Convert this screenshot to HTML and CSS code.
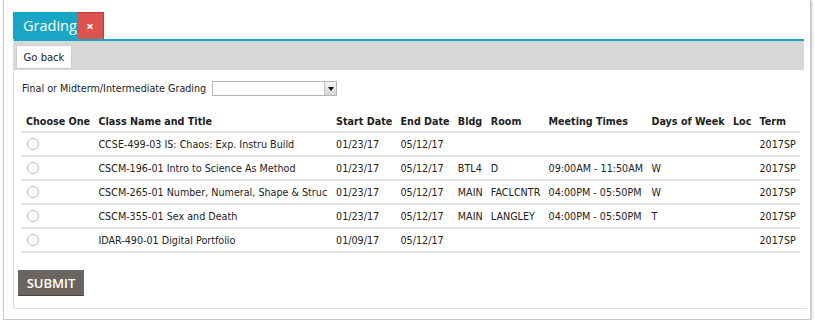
FILE: index.html
```html
<!DOCTYPE html>
<html lang="en">
<head>
    <meta charset="UTF-8">
    <title>Grading</title>
    <link rel="stylesheet" href="styles.css">
</head>
<body>
    <div class="window">
        <div class="panel">
            <div class="tabs">
                <span class="tab active">Grading</span>
                <span class="tab close">&times;</span>
            </div>
            <div class="toolbar">
                <button class="btn">Go back</button>
            </div>
            <div class="content">
                <div class="field">
                    <label for="gtype">Final or Midterm/Intermediate Grading</label>
                    <span class="select" id="gtype"><span class="arrow"></span></span>
                </div>

                <table class="grid">
                    <thead>
                        <tr>
                            <th class="c-choose">Choose One</th>
                            <th>Class Name and Title</th>
                            <th>Start Date</th>
                            <th>End Date</th>
                            <th>Bldg</th>
                            <th>Room</th>
                            <th>Meeting Times</th>
                            <th>Days of Week</th>
                            <th>Loc</th>
                            <th>Term</th>
                        </tr>
                    </thead>
                    <tbody>
                        <tr>
                            <td class="c-choose"><span class="radio"></span></td>
                            <td>CCSE-499-03 IS: Chaos: Exp. Instru Build</td>
                            <td>01/23/17</td>
                            <td>05/12/17</td>
                            <td></td>
                            <td></td>
                            <td></td>
                            <td></td>
                            <td></td>
                            <td>2017SP</td>
                        </tr>
                        <tr>
                            <td class="c-choose"><span class="radio"></span></td>
                            <td>CSCM-196-01 Intro to Science As Method</td>
                            <td>01/23/17</td>
                            <td>05/12/17</td>
                            <td>BTL4</td>
                            <td>D</td>
                            <td>09:00AM - 11:50AM</td>
                            <td>W</td>
                            <td></td>
                            <td>2017SP</td>
                        </tr>
                        <tr>
                            <td class="c-choose"><span class="radio"></span></td>
                            <td>CSCM-265-01 Number, Numeral, Shape &amp; Struc</td>
                            <td>01/23/17</td>
                            <td>05/12/17</td>
                            <td>MAIN</td>
                            <td>FACLCNTR</td>
                            <td>04:00PM - 05:50PM</td>
                            <td>W</td>
                            <td></td>
                            <td>2017SP</td>
                        </tr>
                        <tr>
                            <td class="c-choose"><span class="radio"></span></td>
                            <td>CSCM-355-01 Sex and Death</td>
                            <td>01/23/17</td>
                            <td>05/12/17</td>
                            <td>MAIN</td>
                            <td>LANGLEY</td>
                            <td>04:00PM - 05:50PM</td>
                            <td>T</td>
                            <td></td>
                            <td>2017SP</td>
                        </tr>
                        <tr>
                            <td class="c-choose"><span class="radio"></span></td>
                            <td>IDAR-490-01 Digital Portfolio</td>
                            <td>01/09/17</td>
                            <td>05/12/17</td>
                            <td></td>
                            <td></td>
                            <td></td>
                            <td></td>
                            <td></td>
                            <td>2017SP</td>
                        </tr>
                    </tbody>
                </table>

                <button class="submit">SUBMIT</button>
            </div>
        </div>
    </div>
</body>
</html>
```

FILE: styles.css
```css
body {
    margin: 0;
    background: #ffffff;
    font-family: "DejaVu Sans", Verdana, sans-serif;
    font-size: 9.6px;
    color: #222;
}
.window {
    margin: 0 3px;
    height: 320px;
    box-sizing: border-box;
    border: 1px solid #c8c8c8;
    border-top: none;
    padding: 12px 3px 0 9px;
    box-shadow: 1px 1px 2px rgba(0, 0, 0, 0.25);
}
.panel {
    height: 297px;
    box-sizing: border-box;
    border-left: 1px solid #dcdcdc;
    border-bottom: 1px solid #dcdcdc;
    display: flex;
    flex-direction: column;
}
.tabs {
    display: flex;
    height: 27px;
    margin-left: -1px;
}
.tab {
    display: flex;
    align-items: center;
    font-family: "Open Sans", sans-serif;
    color: #ffffff;
}
.active {
    background: #18a6c4;
    padding: 0 9px 0 10px;
    font-size: 14.5px;
    width: 45px;
}
.close {
    background: #dc5350;
    width: 27px;
    justify-content: center;
    font-size: 13px;
    font-weight: bold;
    border-top: 1px solid #c03a38;
    border-right: 1px solid #c03a38;
    box-sizing: border-box;
}
.toolbar {
    border-top: 2px solid #18a6c4;
    background: #d8d8da;
    height: 31px;
    box-sizing: border-box;
    padding: 4px 2px;
    margin-right: 3px;
}
.btn {
    font-family: inherit;
    font-size: 10px;
    background: #ffffff;
    border: 1px solid #cfcfcf;
    height: 24px;
    width: 56px;
    padding: 0;
    color: #222;
}
.content {
    padding: 0 7px 0 8px;
}
.field {
    display: flex;
    align-items: center;
    margin-top: 11px;
    height: 15px;
}
.field label {
    margin-right: 6px;
}
.select {
    width: 125px;
    height: 15px;
    box-sizing: border-box;
    border: 1px solid #b5b5b5;
    background: #ffffff;
    position: relative;
}
.arrow {
    position: absolute;
    right: 0;
    top: 0;
    width: 11px;
    height: 13px;
    background: linear-gradient(#f4f4f4, #d8d8d8);
    border-left: 1px solid #c4c4c4;
}
.arrow::after {
    content: "";
    position: absolute;
    left: 3px;
    top: 5px;
    border-left: 3px solid transparent;
    border-right: 3px solid transparent;
    border-top: 4px solid #111;
}
.grid {
    width: 100%;
    border-collapse: collapse;
    margin-top: 15px;
}
.grid th {
    text-align: left;
    font-weight: bold;
    padding: 3px 4px 3px;
    height: 14px;
    border-bottom: 2px solid #e2e2e2;
    white-space: nowrap;
}
.grid td {
    padding: 0 4px;
    height: 22px;
    border-bottom: 2px solid #e2e2e2;
    white-space: nowrap;
}
td.c-choose {
    padding-left: 5px;
}
.radio {
    display: block;
    width: 10px;
    height: 10px;
    border: 1px solid #b8b8b8;
    border-radius: 50%;
    background: #ffffff;
}
.submit {
    margin-top: 17px;
    margin-left: -4px;
    background: #6c645e;
    color: #ffffff;
    border: none;
    border-bottom: 1px solid #4a443f;
    width: 66px;
    height: 26px;
    font-family: "Open Sans", sans-serif;
    font-size: 13px;
    font-weight: 600;
    padding: 0;
}
```
